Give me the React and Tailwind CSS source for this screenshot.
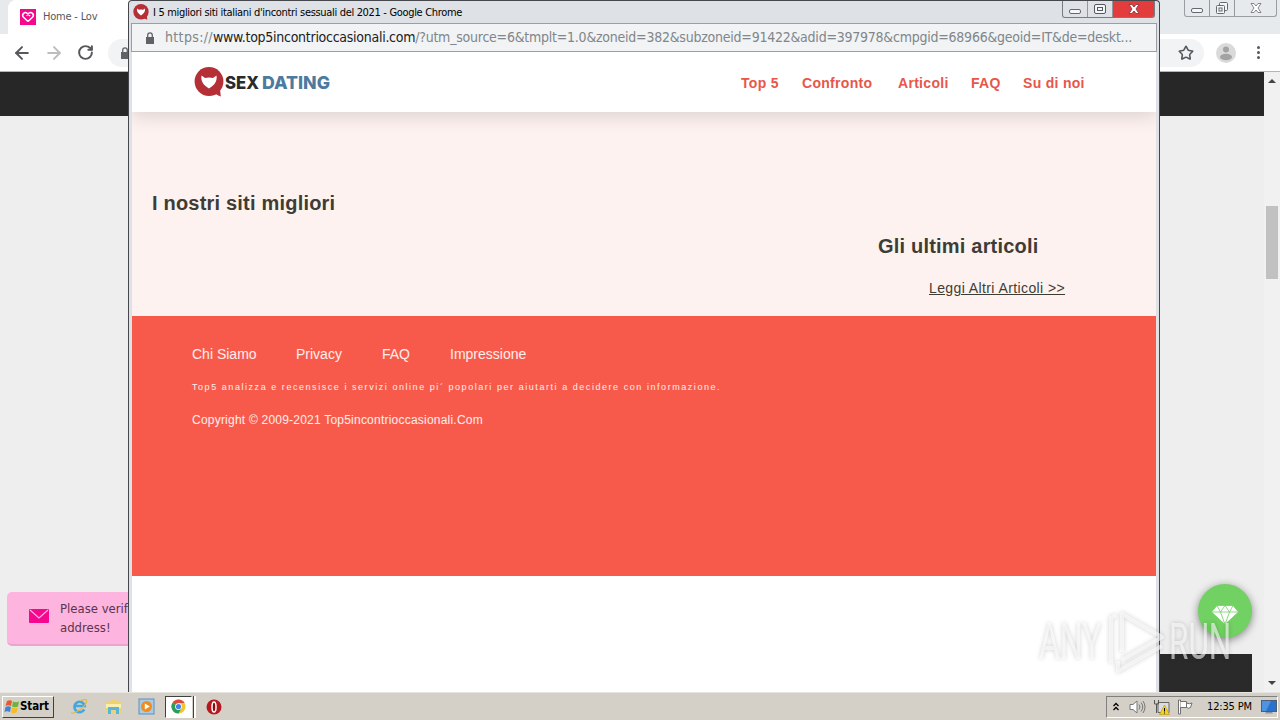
import { Star, RotateCw, ArrowLeft, ArrowRight } from "lucide-react";

const navLinks = [
    { name: "Top 5", width: "w-[61px]" },
    { name: "Confronto", width: "w-[96px]" },
    { name: "Articoli", width: "w-[73px]" },
    { name: "FAQ", width: "w-[52px]" },
    { name: "Su di noi", width: "w-[62px]" },
];

const footerLinks = [
    { name: "Chi Siamo", width: "w-[104px]" },
    { name: "Privacy", width: "w-[86px]" },
    { name: "FAQ", width: "w-[68px]" },
    { name: "Impressione", width: "w-[80px]" },
];

const Lock = ({ className }) => (
    <svg viewBox="0 0 10 12" className={className} fill="#5f6368">
        <path d="M1 5h8v7H1z" />
        <path d="M2.7 5V3.2a2.3 2.3 0 0 1 4.6 0V5" fill="none" stroke="#5f6368" strokeWidth="1.3" />
    </svg>
);

const HeartBadge = ({ className }) => (
    <svg viewBox="0 0 30 30" className={className}>
        <circle cx="15" cy="14.5" r="14.4" fill="#b52f36" />
        <path d="M18 27l8-5 .8 7.500q-3-.8-4-2z" fill="#b52f36" />
        <path d="M7.500 8.500L11 11q4-1.200 8 0l3.500-2.500c1 6-2.500 10-7.500 13C10 18.500 6.500 14.500 7.500 8.500z" fill="#fff" />
    </svg>
);

const WindowButtons = ({ active }) => (
    <div className={"flex w-[93px] h-[17px] rounded-b-[3px] border border-t-0 overflow-hidden " + (active ? "border-[#777b82]" : "border-[#9a9da2]")}>
        <div className="w-[25px] border-r border-[#94979c] flex items-end justify-center pb-[3px]">
            <span className="w-[12px] h-[5px] border border-[#65686e] rounded-[2px] bg-[#f5f6f8]"></span>
        </div>
        <div className="w-[25px] border-r border-[#94979c] flex items-center justify-center">
            {
                active ?
                <span className="w-[12px] h-[10px] border border-[#55585e] rounded-[2px] bg-[#f5f6f8] flex items-center justify-center">
                    <span className="w-[6px] h-[4px] border border-[#55585e]"></span>
                </span>
                :
                <svg viewBox="0 0 14 14" className="w-[14px] h-[14px]" fill="#f5f6f8" stroke="#65686e">
                    <rect x="4.500" y="1.500" width="8" height="8" rx="1" />
                    <rect x="1.500" y="4.500" width="8" height="8" rx="1" />
                    <rect x="4" y="7" width="3" height="3" />
                </svg>
            }
        </div>
        <div className={"flex-1 flex items-center justify-center " + (active ? "bg-[#e23c3c]" : "")}>
            <svg viewBox="0 0 12 10" className="w-[12px] h-[10px]">
                <path d="M1 .5h3l2 2.500 2-2.500h3L8 5l3 4.500H8L6 7 4 9.500H1L4 5z" fill="#fff" stroke={active ? "#8c3a42" : "#777a80"} strokeWidth="0.9" />
            </svg>
        </div>
    </div>
);

const BackgroundBrowser = () => (
    <div className="h-full flex flex-col bg-[#eeeeee]">
        <div className="h-[34px] flex justify-between bg-[#e7eaed] shrink-0">
            <div className="flex items-center w-[200px] ml-[8px] pl-[12px] rounded-tl-lg bg-white">
                <div className="w-[16px] h-[16px] bg-[#f5088e] flex items-center justify-center">
                    <svg viewBox="0 0 16 16" className="w-[16px] h-[16px]" fill="none" stroke="#fff" strokeWidth="1.500">
                        <path d="M8 12.500L3.300 8a2.700 2.700 0 0 1 3.900-3.700L10 7M8 12.500L12.700 8a2.700 2.700 0 0 0-3.900-3.700L6.500 6.600" />
                    </svg>
                </div>
                <span className="ml-[7px] pt-[1px] text-[11px] tracking-[-0.2px] text-[#55585c] whitespace-nowrap">Home - Lov</span>
            </div>
            <div className="pr-[3px]"><WindowButtons /></div>
        </div>
        <div className="h-[38px] flex items-center justify-between bg-white border-b border-[#b5b5b5] shrink-0">
            <div className="flex items-center pl-[12px]">
                <ArrowLeft className="w-[20px] h-[20px] text-[#55585c]" strokeWidth={2.4} />
                <ArrowRight className="ml-[12px] w-[20px] h-[20px] text-[#bdbec0]" strokeWidth={2.4} />
                <RotateCw className="ml-[13px] w-[17px] h-[17px] text-[#55585c]" strokeWidth={2.800} />
                <div className="ml-[14px] w-[100px] h-[28px] rounded-l-full bg-[#f1f3f4] flex items-center pl-[12px]">
                    <Lock className="w-[10px] h-[12px]" />
                </div>
            </div>
            <div className="flex items-center pr-[20px]">
                <div className="w-[100px] h-[28px] rounded-r-full bg-[#f1f3f4] flex items-center justify-end pr-[10px]">
                    <Star className="w-[16px] h-[16px] text-[#55585c]" strokeWidth={2.400} />
                </div>
                <svg viewBox="0 0 20 20" className="ml-[12px] w-[20px] h-[20px]">
                    <circle cx="10" cy="10" r="10" fill="#dadada" />
                    <circle cx="10" cy="6.500" r="3" fill="#a3a3a3" />
                    <ellipse cx="10" cy="14" rx="6" ry="3.300" fill="#a3a3a3" />
                </svg>
                <div className="ml-[21px] flex flex-col gap-[2px]">
                    <span className="w-[3px] h-[3px] rounded-full bg-[#55585c]"></span>
                    <span className="w-[3px] h-[3px] rounded-full bg-[#55585c]"></span>
                    <span className="w-[3px] h-[3px] rounded-full bg-[#55585c]"></span>
                </div>
            </div>
        </div>
        <div className="flex-1 flex min-h-0">
            <div className="flex-1 flex flex-col justify-between">
                <div className="h-[44px] bg-[#272727]"></div>
                <div className="flex items-end justify-between">
                    <div className="ml-[7px] mb-[46px] w-[200px] h-[54px] rounded-[5px] bg-[#fdb4de] border-b-2 border-[#eba4cf] flex items-center">
                        <svg viewBox="0 0 20 14" className="ml-[22px] mt-[-5px] w-[20px] h-[14px]">
                            <rect width="20" height="14" rx="1" fill="#f5088e" />
                            <path d="M1 1l9 8 9-8" fill="none" stroke="#fdb4de" strokeWidth="1.200" />
                        </svg>
                        <p className="ml-[11px] text-[13px] leading-[19px] text-[#5a3550]">Please verify your<br />address!</p>
                    </div>
                    <div className="w-[112px] flex flex-col">
                        <div className="self-end mr-[12px] mb-[16px] w-[54px] h-[54px] rounded-full bg-[#71d162] shadow-[0_2px_8px_rgba(0,0,0,0.45)] flex items-center justify-center">
                            <svg viewBox="0 0 28 20" className="mt-[7px] w-[28px] h-[20px]" fill="#fff" stroke="#71d162" strokeWidth="0.800">
                                <path d="M6 .5h16l5.500 6.500L14 19.500.5 7z" />
                                <path d="M.5 7h27M6 .5L9.500 7 14 .5 18.500 7 22 .5M9.500 7L14 19.500 18.500 7" fill="none" />
                            </svg>
                        </div>
                        <div className="h-[38px] w-[100px] bg-[#2a2a2a]"></div>
                    </div>
                </div>
            </div>
            <div className="w-[16px] bg-[#f1f1f1] flex flex-col items-center pt-[7px] pb-[7px]">
                <span className="border-x-4 border-x-transparent border-b-4 border-b-[#444]"></span>
                <div className="mt-[123px] w-[12px] h-[73px] bg-[#c1c1c1]"></div>
                <span className="mt-auto border-x-4 border-x-transparent border-t-4 border-t-[#444]"></span>
            </div>
        </div>
    </div>
);

const Popup = () => (
    <div className="absolute left-[128px] top-0 w-[1032px] h-[692px] border border-b-0 border-[#45474d] rounded-t-[4px] bg-[#dee1e6] flex flex-col">
        <div className="h-[22px] flex items-start justify-between shrink-0">
            <div className="flex items-center h-[22px] pl-[4px]">
                <HeartBadge className="w-[16px] h-[16px]" />
                <span className="ml-[4px] pt-[2px] text-[11px] tracking-[-0.325px] text-black whitespace-nowrap">I 5 migliori siti italiani d'incontri sessuali del 2021 - Google Chrome</span>
            </div>
            <div className="pr-[4px]"><WindowButtons active={true} /></div>
        </div>
        <div className="mx-[2px] h-[29px] bg-[#f1f3f4] border border-[#9b9ea3] flex items-center shrink-0">
            <Lock className="ml-[13px] w-[10px] h-[12px] shrink-0" />
            <p className="ml-[10px] text-[14px] tracking-[-0.235px] text-[#80868b] whitespace-nowrap"><span className="tracking-[0.35px]">https://</span><span className="text-[#202124] tracking-[-0.27px]">www.top5incontrioccasionali.com</span>/?utm_source=6&tmplt=1.0&zoneid=382&subzoneid=91422&adid=397978&cmpgid=68966&geoid=IT&de=deskt...</p>
        </div>
        <div className="mx-[3px] flex-1 bg-white flex flex-col font-['Liberation_Sans',Arial,sans-serif]">
            <header className="relative h-[60px] bg-white shadow-[0_4px_18px_rgba(0,0,0,0.14)] flex items-center justify-between pl-[62px] pr-[71px] shrink-0 [clip-path:inset(0_0_-30px_0)]">
                <div className="flex items-center">
                    <HeartBadge className="w-[30px] h-[30px]" />
                    <svg viewBox="0 0 108 20" className="w-[108px] h-[20px] font-['Inter',sans-serif]" fontSize="18" fontWeight="800">
                        <text x="1" y="16.500" textLength="34" lengthAdjust="spacingAndGlyphs" fill="#2b2b2b">SEX</text>
                        <text x="38" y="16.500" textLength="68" lengthAdjust="spacingAndGlyphs" fill="#4d7b9f">DATING</text>
                    </svg>
                </div>
                <nav className="flex pt-[2px] text-[14px] font-bold tracking-[0.3px] text-[#e8564a] whitespace-nowrap">
                    {
                        navLinks.map((link, i) => {
                            return <a key={i} className={link.width}>{link.name}</a>
                        })
                    }
                </nav>
            </header>
            <main className="h-[204px] bg-[#fdf2f0] text-[#3d3d36] shrink-0 flex flex-col">
                <h2 className="mt-[79px] ml-[20px] text-[20px] leading-[24px] font-bold tracking-[0.2px]">I nostri siti migliori</h2>
                <div className="mt-[19px] ml-[746px]">
                    <h2 className="text-[20px] leading-[24px] font-bold tracking-[0.2px]">Gli ultimi articoli</h2>
                    <a className="block mt-[20px] ml-[51px] text-[14px] leading-[20px] tracking-[0.4px] underline">Leggi Altri Articoli &gt;&gt;</a>
                </div>
            </main>
            <footer className="h-[260px] bg-[#f75a4b] text-white/90 pl-[60px] pt-[28px] shrink-0">
                <div className="flex text-[14px] leading-[20px]">
                    {
                        footerLinks.map((link, i) => {
                            return <a key={i} className={link.width}>{link.name}</a>
                        })
                    }
                </div>
                <p className="mt-[16px] text-[9px] leading-[15px] tracking-[1.55px]">Top5 analizza e recensisce i servizi online pi´ popolari per aiutarti a decidere con informazione.</p>
                <p className="mt-[17px] text-[12px] leading-[16px] tracking-[0.22px]">Copyright © 2009-2021 Top5incontrioccasionali.Com</p>
            </footer>
        </div>
    </div>
);

const Watermark = () => (
    <div className="absolute left-[1036px] top-[605px] w-[204px] h-[74px] drop-shadow-[0_0_2px_rgba(0,0,0,0.3)]">
        <svg viewBox="0 0 204 74" className="w-[204px] h-[74px] overflow-visible font-['Roboto',sans-serif]" fill="#fff" fillOpacity="0.6">
            <text transform="translate(3 54) scale(0.64 1)" fontSize="50">ANY</text>
            <text transform="translate(133 54) scale(0.63 1)" fontSize="50">RUN</text>
            <g fill="none" stroke="#fff" strokeOpacity="0.6" strokeWidth="4" strokeLinejoin="round">
                <path d="M80 10l-5 3v45" />
                <path d="M86 47V9l40 23-40 23" />
                <path d="M82 56v10l44-25" />
            </g>
        </svg>
    </div>
);

const Taskbar = () => (
    <div className="h-[28px] bg-[#d4d0c8] border-t border-[#e6e4df] flex items-center justify-between shrink-0">
        <div className="flex items-center">
            <div className="ml-[2px] w-[52px] h-[22px] border border-l-white border-t-white border-r-[#404040] border-b-[#404040] flex items-center pl-[1px]">
                <svg viewBox="0 0 16 16" className="w-[16px] h-[16px] shrink-0">
                    <path d="M3 2c2-1 4-1 5 0L7 7c-2-1-4-1-5.500 0z" fill="#e9572b" />
                    <path d="M9 2.500c2 1 4 1 6 0L14 7.500c-2 1-4 1-6 0z" fill="#6db33f" />
                    <path d="M1.500 8c2-1 3.500-1 5.500 0l-1 5c-2-1-4-1-5.500 0z" fill="#3c83d6" />
                    <path d="M8 8.500c2 1 4 1 6 0l-1.500 5c-2 1-3.500 1-5.500 0z" fill="#f5bd25" />
                </svg>
                <span className="pt-[1px] text-[11.5px] font-bold text-black tracking-[-0.1px]">Start</span>
            </div>
            <svg viewBox="0 0 18 18" className="ml-[17px] w-[17px] h-[17px]" fill="none">
                <path d="M14 12a5.500 5.500 0 1 1 .5-3.500H5" stroke="#45a7e2" strokeWidth="2.800" />
                <path d="M1 15c-2 4 12-3 15-10 2-4-2-4-6-2" stroke="#e4b93c" strokeWidth="1.200" />
            </svg>
            <svg viewBox="0 0 17 17" className="ml-[17px] w-[17px] h-[17px]">
                <path d="M1 3h5l1-1h6v2h3v11H1z" fill="#ecd272" />
                <path d="M1 6h15v4H1z" fill="#f9edb0" />
                <path d="M3 9h11v7h-3v-4H6v4H3z" fill="#58b5dd" />
            </svg>
            <svg viewBox="0 0 17 17" className="ml-[16px] w-[17px] h-[17px]">
                <rect x="1" y="1" width="15" height="15" fill="#a8cbe8" stroke="#5b8fbe" />
                <circle cx="8.500" cy="8.500" r="5.500" fill="#f18d1d" />
                <path d="M6.800 5.500l5 3-5 3z" fill="#fff" />
            </svg>
            <div className="ml-[10px] w-[27px] h-[22px] bg-white border border-l-[#404040] border-t-[#404040] border-white flex items-center justify-center">
                <svg viewBox="0 0 16 16" className="w-[15px] h-[15px]">
                    <circle cx="8" cy="8" r="7.500" fill="#f2c42d" />
                    <path d="M8 8L1.500 4.250A7.500 7.500 0 0 1 14.500 4.250H8z" fill="#dd4b39" />
                    <path d="M8 8L1.500 4.250A7.500 7.500 0 0 0 8 15.500L11 10z" fill="#2a9d58" />
                    <circle cx="8" cy="8" r="3.600" fill="#fff" />
                    <circle cx="8" cy="8" r="2.800" fill="#4583ea" />
                </svg>
            </div>
            <span className="ml-[1px] w-[3px] h-[22px] border-l border-[#404040] bg-white"></span>
            <svg viewBox="0 0 16 16" className="ml-[10px] w-[16px] h-[16px]">
                <circle cx="8" cy="8" r="7.500" fill="#b5181d" />
                <ellipse cx="8" cy="8" rx="2" ry="5" fill="#8c0a10" stroke="#fff" strokeWidth="1.500" />
            </svg>
        </div>
        <div className="mr-[2px] w-[172px] h-[22px] border border-l-[#808080] border-t-[#808080] border-white flex items-center">
            <svg viewBox="0 0 6 9" className="ml-[6px] w-[6px] h-[9px]" fill="none" stroke="#000" strokeWidth="1.300">
                <path d="M.5 4L3 1.500 5.500 4M.5 8L3 5.500 5.500 8" />
            </svg>
            <svg viewBox="0 0 17 16" className="ml-[10px] w-[17px] h-[16px]" fill="none" stroke="#77787a">
                <path d="M1 5.500h3L8 2v12l-4-3.500H1z" fill="#fff" />
                <path d="M10 5.500q2 2.500 0 5M12 3.500q3.500 4.500 0 9M14 2q4 6 0 12" />
            </svg>
            <svg viewBox="0 0 17 16" className="ml-[7px] w-[17px] h-[16px]">
                <path d="M5 3.500h11v10H5z" fill="#d9dce0" stroke="#666" />
                <path d="M1.500 1v4h4V1M3.500 5v9" fill="none" stroke="#555" />
                <path d="M11.500 6l5 9.500h-10z" fill="#f6d21c" stroke="#b8960d" strokeWidth="0.600" />
                <path d="M11.500 9v3.500M11.500 13.500v1" stroke="#000" />
            </svg>
            <svg viewBox="0 0 16 16" className="ml-[7px] w-[16px] h-[16px]" fill="#fff" stroke="#707070">
                <path d="M1.500 1v14h2V1z" />
                <path d="M3.500 2.500h6v6h-6M9.500 4q3 1.500 5.500 0l-1.500 4.500q-2 1.500-4 0" />
            </svg>
            <span className="ml-[14px] pt-[2px] w-[46px] text-[11px] tracking-[-0.15px] text-black whitespace-nowrap">12:35 PM</span>
            <svg viewBox="0 0 16 14" className="ml-[8px] w-[16px] h-[14px]">
                <rect x=".5" y=".5" width="15" height="11" fill="#2a72cc" stroke="#4c5f7a" />
                <path d="M1 1h9L5 11H1z" fill="#4e94e2" />
                <path d="M5 12h6l1 1.500H4z" fill="#8a93a0" />
            </svg>
        </div>
    </div>
);

const App = () => {
    return (
        <div className="relative w-[1280px] h-[720px] overflow-hidden flex flex-col font-['DejaVu_Sans_Condensed','DejaVu_Sans',sans-serif]">
            <div className="h-[692px] shrink-0">
                <BackgroundBrowser />
            </div>
            <Taskbar />
            <Popup />
            <Watermark />
        </div>
    )
}

export default App;
